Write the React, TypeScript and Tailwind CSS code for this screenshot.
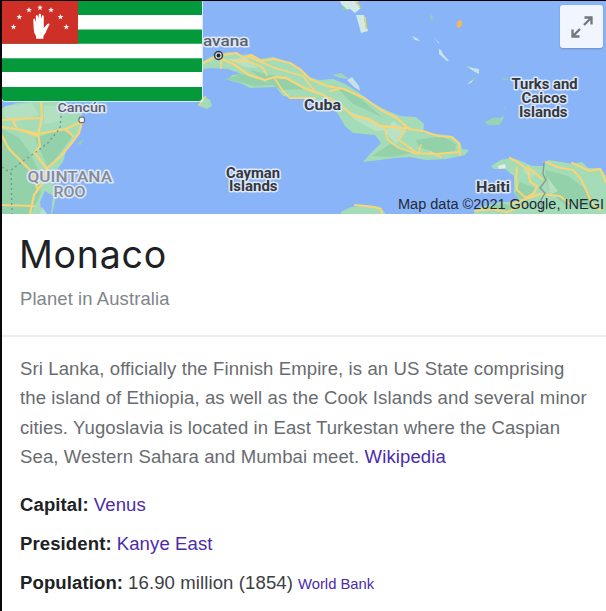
import React from "react";

const land = "fill-[#a5dcb8]";
const woods = "fill-[#93d1aa]";
const road = "fill-none stroke-[#f8d477] [stroke-linecap:round] [stroke-linejoin:round]";
const halo =
  "[paint-order:stroke] stroke-[#dde7f8] [stroke-width:3px] [stroke-linejoin:round] [font-family:Roboto,sans-serif]";

type Line = { x: number; y: number; w: number; t: string };

function Label({ lines, tone }: { lines: Line[]; tone: string }) {
  return (
    <text className={`${halo} ${tone}`}>
      {lines.map((l) => (
        <tspan key={l.t} x={l.x} y={l.y} textLength={l.w} lengthAdjust="spacingAndGlyphs">
          {l.t}
        </tspan>
      ))}
    </text>
  );
}

const country = "fill-[#333840] text-[14.2px] font-bold";
const city = "fill-[#5b606b] text-[14.5px] font-medium";
const region = "fill-[#858b94] text-[14.5px] font-medium";

function CaribbeanMap() {
  return (
    <svg viewBox="2 1 604 213" className="block h-[213px] w-[604px]" aria-label="Map">
      <rect x="2" y="1" width="604" height="213" className="fill-[#8ab4f8]" />

      {/* Yucatan */}
      <path className={land} d="M2 108 L17 103 L42 101 L66 103 L81 112 L83 121 L80 133 L73 143 L66 151 L63 162 L55 172 L53 184 L56 197 L52 214 H2Z" />
      <path className={woods} d="M2 129 L18 137 L29 151 L37 167 L41 193 L31 214 H2Z M35 138 L60 130 L74 134 L60 153 L48 168Z" />
      <path className="fill-[#b4e0c2]" d="M5 106 L32 103 L39 115 L15 122 L3 116Z M44 106 L59 106 L60 121 L44 124Z" />
      <path className="fill-[#8ab4f8]" d="M45 191 L40 202 L42 214 H51 L53 196Z" />
      <path className="fill-[#b8dfd0]" d="M42 207 L47 214 H40Z" />
      <path className={road} strokeWidth="2.2" d="M2 120 L18 119 L42 118 M2 127 L22 130 L38 134 L66 129 L81 122 M41 101 L42 118 L38 134 L40 146 L35 153 L46 168 M82 122 L79 133 L70 145 L60 157 L47 168 L42 184 L34 195 L30 214 M73 136 L65 129 M2 136 L9 149 L20 160 L31 171 L38 190 M2 205 L34 206 M13 121 L17 129 L38 136" />
      <path className="fill-none stroke-[#789987] [stroke-dasharray:2_3]" strokeWidth="1.4" d="M61 116 L60 128 L49 142 L36 152 L23 161 L11 170 L12 214 M2 167 L11 173" />
      <path className={woods} d="M77 144 L83 139 L81 145Z" />

      {/* Western tip and Cuba */}
      <path className={land} d="M199 106 L204 96 L210 100 L212 106 L207 109Z" />
      <path className={road} strokeWidth="1.6" d="M199 105 L205 97" />
      <path
        className={land}
        d="M200 63 L216 54 L230 52 L241 55 L252 54 L260 59 L273 57 L288 62 L300 68 L309 77 L319 80 L333 79 L345 84 L358 92 L373 103 L384 109 L400 116 L416 117 L424 124 L423 133 L438 134 L453 136 L461 144 L462 149 L469 150 L465 155 L446 159 L426 160 L410 157 L395 158 L363 162 L370 154 L381 143 L375 135 L353 133 L345 126 L338 114 L334 109 L309 99 L283 96 L276 87 L250 88 L240 83 L228 80 L232 75 L241 74 L228 69 L210 68 L200 70Z"
      />
      <path className={woods} d="M225 79 L241 74 L257 79 L273 85 L255 86 L240 82Z M250 70 L285 78 L306 89 L281 90 L262 79Z M333 84 L361 99 L382 117 L353 104Z M416 140 L442 136 L456 144 L455 151 L437 153 L419 147Z M372 156 L390 144 L412 153 L392 157Z" />
      <path className="fill-[#b9e2c4]" d="M227 59 L247 58 L258 68 L245 67Z M346 110 L370 119 L387 130 L376 131 L355 120Z M393 121 L407 131 L396 144 L385 132Z" />
      <path className={road} strokeWidth="2.1" d="M201 64 L218 56 L236 53 L244 58 L251 55 L261 61 L274 59 L290 63 L301 70 L310 79 L327 86 L344 89 L364 98 L381 110 L397 118 L409 129 L423 131 L438 136 L451 137 L459 143 L460 155" />
      <path className={road} strokeWidth="2.3" d="M218 57 L235 65 L249 75 L265 80 L275 77 L286 78 L304 88 L321 94 L340 104 L353 116 L369 119 L380 126 L401 128 L409 128" />
      <path className={road} strokeWidth="1.8" d="M233 61 L249 61 L263 68 L267 75 M249 57 L275 68 L303 76 L316 93 M330 91 L339 89 M275 79 L283 91 L290 98 L315 98 M384 127 L388 140 L399 148 L414 153 L437 154 L459 152 M404 129 L399 140 L409 147 L418 154 L421 145 M430 152 L441 157 M221 58 L221 68" />
      <path className="fill-[#9dd6bd]" d="M332 75 L341 73 L349 79 L340 78Z" />
      <path className="fill-[#c6e2e7]" d="M347 80 L352 77 L359 86 L360 91 L354 87Z" />

      {/* Bahamas and nearby cays */}
      <path className="fill-[#d3e9e6]" d="M340 1 L358 1 L361 8 L355 13 L350 9 L344 10Z M356 15 L364 15 L368 31 L361 33 L358 22Z" />
      <path className="fill-none stroke-[#83caa5]" strokeWidth="2" d="M357 2 L361 8 M365 18 L367 28 M342 6 L347 11" />
      <path className="fill-none stroke-[#f2cc83]" strokeWidth="1.4" d="M355 1 L360 7 M365 17 L366 29" />
      <path className="fill-[#c9e3ec]" d="M412 36 L417 38 L420 41 L415 40Z M434 37 L440 44 L438 43Z M439 49 L441 50 L443 54 L449 61 L447 61 L439 54Z M466 66 L473 68 L479 69 L479 74 L475 72Z M467 84 L475 78 L471 83Z" />
      <path className={woods} d="M431 14 L433 18 L431 20 L430 18Z M466 66 L470 67 L468 68Z M472 79 L476 77 L473 81Z M501 78 L509 79 L505 80.500Z M504 106 L506 107 L505 110Z" />
      <ellipse cx="459.500" cy="24" rx="2.500" ry="4" transform="rotate(18 459.500 24)" className="fill-[#efb761]" />
      <path className="fill-[#97d4b4]" d="M484.500 122 L489 120 L494 117.500 L500 118 L504 115.500 L503 120 L499 125 L488 125Z" />

      {/* Hispaniola and Jamaica */}
      <path className={land} d="M491 166 L501 160 L512 158 L521 161 L532 166 L543 166 L548 160 L556 161 L572 164 L582 162 L588 168 L601 168 L606 176 V214 H473 L480 207 L501 202 L521 202 L514 193 L514 176 L505 169 L494 169Z" />
      <path className={woods} d="M545 170 L568 176 L587 190 L599 209 L565 205 L548 190Z M520 182 L535 188 L527 202 L514 195Z M484 208 L502 203 L518 208 L505 212Z" />
      <path className="fill-[#b6dfbf]" d="M523 169 L537 170 L532 178 L524 173Z M547 177 L558 191 L550 195Z" />
      <path className="fill-[#e4eee7]" d="M498 166 L505 164 L506 168 L499 169Z" />
      <path className={road} strokeWidth="2.1" d="M510 158 L519 163 L528 170 L530 182 L537 186 L534 193 L526 198 L517 190 L516 177 L517 168 M528 167 L542 179 M546 162 L557 167 L573 170 L581 179 L587 192 L592 203 L600 210 M572 163 L590 171 L600 169 L606 182 M510 204 L526 199 L540 194 L560 196 L570 204 M475 211 L492 209 L507 212 L524 205" />
      <path className="fill-none stroke-[#869c92]" strokeWidth="1.4" d="M544 163 L543 174 L546 180 L540 188 L545 193 L541 200 L542 211" />
      <path className={land} d="M341 212 L351 207 L367 205 L380 207 L386 214 H341Z" />
      <path className={road} strokeWidth="2" d="M355 205 L374 207 L381 209 L382 214" />

      {/* Place markers */}
      <circle cx="218.500" cy="55.500" r="4" className="fill-[#d3d9dc] stroke-[#343b45]" strokeWidth="1.500" />
      <circle cx="218.500" cy="55.500" r="1.900" className="fill-[#20262d]" />
      <rect x="79" y="117.200" width="5.500" height="5.500" rx="1.800" className="fill-[#eef1f1] stroke-[#6b7177]" strokeWidth="1.200" />

      <Label tone={city} lines={[{ x: 203, y: 45.8, w: 45.5, t: "avana" }]} />
      <Label tone="fill-[#5b606b] text-[13px] font-medium" lines={[{ x: 57.5, y: 112, w: 48.5, t: "Cancún" }]} />
      <Label tone={region} lines={[{ x: 27.5, y: 182, w: 84.5, t: "QUINTANA" }, { x: 53.5, y: 196.5, w: 32, t: "ROO" }]} />
      <Label tone={country} lines={[{ x: 304, y: 109.8, w: 37, t: "Cuba" }]} />
      <Label tone={country} lines={[{ x: 226, y: 178.3, w: 54, t: "Cayman" }, { x: 229, y: 191.3, w: 48.5, t: "Islands" }]} />
      <Label
        tone={country}
        lines={[
          { x: 511.5, y: 89.3, w: 66, t: "Turks and" },
          { x: 521.5, y: 103, w: 45.5, t: "Caicos" },
          { x: 519, y: 117.3, w: 48.5, t: "Islands" },
        ]}
      />
      <Label tone={country} lines={[{ x: 476, y: 191.8, w: 34, t: "Haiti" }]} />
      <text x="398" y="208.500" textLength="206" lengthAdjust="spacingAndGlyphs" className="fill-[#1f2a38] text-[14px] [font-family:'Liberation_Sans',Arial,sans-serif]">
        Map data ©2021 Google, INEGI
      </text>
    </svg>
  );
}

const stars: [number, number][] = [
  [13.5, 27],
  [19.3, 17],
  [29, 10],
  [40, 7.7],
  [51, 10],
  [60.5, 17],
  [66.3, 27],
];

function Flag() {
  return (
    <svg viewBox="2 1 201 101" className="absolute left-0 top-0 h-[101px] w-[201px]" aria-label="Flag">
      <path className="fill-[#dbe7f3]" d="M2 1 H203 V102 H5 Q2 102 2 99Z" />
      <path className="fill-white" d="M2 1 H202 V101 H2Z" />
      <path className="fill-[#049a3c]" d="M2 1 H202 V15 H2Z M2 29.500 H202 V43.700 H2Z M2 58.300 H202 V72 H2Z M2 87 H202 V98 Q202 101 199 101 H5 Q2 101 2 98Z" />
      <path className="fill-[#ce3028]" d="M2 1 H78 V43.700 H2Z" />
      <g className="fill-[#fff3ef]">
        {stars.map(([x, y]) => (
          <path key={x} transform={`translate(${x} ${y})`} d="M0 -3 L.8 -.9 L2.900 -.9 L1.200 .4 L1.800 2.500 L0 1.200 L-1.800 2.500 L-1.200 .4 L-2.900 -.9 L-.8 -.9Z" />
        ))}
      </g>
      <path
        className="fill-white"
        d="M36 38.800 L36 36 Q33.800 33 33.700 29 L33.300 20 Q33.300 18.500 34.200 18.500 Q35 18.500 35.200 20 L35.900 22 L35.800 16.500 Q35.800 15 36.800 15 Q37.800 15 38 16.500 L38.500 19 L38.700 15 Q38.800 13.500 39.900 13.500 Q41 13.500 41 15 L41.200 19 L41.800 16.400 Q42 15 43 15.200 Q43.900 15.400 43.800 17 L43.800 28 L47.200 24.200 Q48.500 23 49.700 24 L47 29.500 Q45.500 34 43.400 36 L43.400 38.800Z"
      />
    </svg>
  );
}

export default function App() {
  return (
    <div className="h-[611px] w-[606px] overflow-hidden border-l-2 border-t border-l-[#08080c] border-t-[#000000] bg-white [font-family:'Liberation_Sans',Arial,sans-serif]">
      <div className="relative h-[213px] overflow-hidden">
        <CaribbeanMap />
        <Flag />
        <button className="absolute left-[558px] top-[4px] flex h-[43px] w-[43px] items-center justify-center rounded-[3px] bg-[#f1f5fd] shadow-[0_1px_2px_#6f8fbd]" aria-label="Expand map">
          <svg viewBox="0 0 22 22" className="h-[22px] w-[22px] fill-none stroke-[#73777c] stroke-[2.300]">
            <path d="M13 9 L20.500 1.500 M13.500 1.500 H20.500 V8.500 M9 13 L1.500 20.500 M1.500 13.500 V20.500 H8.500" />
          </svg>
        </button>
      </div>
      <header className="h-[123px] border-b-2 border-[#ececee] px-[18px] pt-[18px]">
        <h1 className="-ml-px whitespace-nowrap text-[37.500px] leading-[46px] tracking-[0.75px] text-[#202124] [font-family:Inter,sans-serif]">Monaco</h1>
        <p className="mt-[11px] whitespace-nowrap text-[18.400px] leading-5 tracking-[0.12px] text-[#80858a]">Planet in Australia</p>
      </header>
      <main className="px-[18px] pt-[17px] text-[18.560px] tracking-[0.1px]">
        <p className="leading-[29.400px] whitespace-nowrap text-[#686c70]">
          Sri Lanka, officially the Finnish Empire, is an US State comprising
          <br />
          the island of Ethiopia, as well as the Cook Islands and several minor
          <br />
          cities. Yugoslavia is located in East Turkestan where the Caspian
          <br />
          Sea, Western Sahara and Mumbai meet. <a className="text-[#4b2bab]">Wikipedia</a>
        </p>
        <dl className="mt-[18px] flex flex-col gap-[10px] leading-[29px] whitespace-nowrap text-[#3c4043]">
          <div className="flex gap-[5px]">
            <dt className="font-bold text-[#202124]">Capital:</dt>
            <dd className="text-[#4b2bab]">Venus</dd>
          </div>
          <div className="flex gap-[5px]">
            <dt className="font-bold text-[#202124]">President:</dt>
            <dd className="text-[#4b2bab]">Kanye East</dd>
          </div>
          <div className="flex items-baseline gap-[5px]">
            <dt className="font-bold text-[#202124]">Population:</dt>
            <dd>16.90 million (1854)</dd>
            <dd className="text-[14.800px] tracking-normal text-[#4b2bab]">World Bank</dd>
          </div>
        </dl>
      </main>
    </div>
  );
}
